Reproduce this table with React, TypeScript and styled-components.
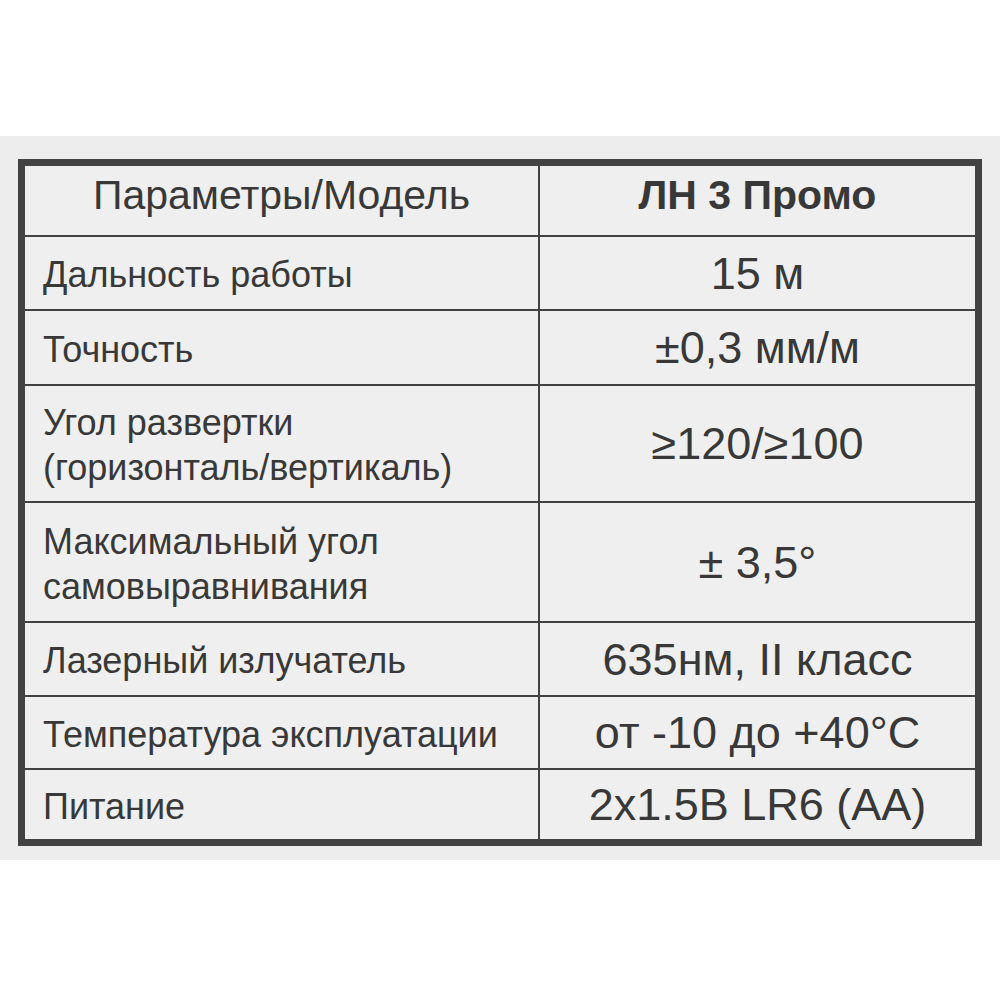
import React from "react";
import styled, { createGlobalStyle } from "styled-components";

const Global = createGlobalStyle`
  html, body { margin: 0; padding: 0; background: #ffffff; }
  body { font-family: "Liberation Sans", Arial, sans-serif; }
`;

const Page = styled.div`
  width: 1000px;
  height: 1000px;
  background: #ffffff;
  padding-top: 136px;
  box-sizing: border-box;
`;

const Sheet = styled.div`
  background: #ededed;
  height: 724px;
  box-sizing: border-box;
  padding: 23px 18px 0 18px;
`;

const Table = styled.div`
  display: grid;
  grid-template-columns: 515px 1fr;
  grid-template-rows: 71px 74px 75px 117px 120px 74px 73px 69px;
  border: 7px solid #424242;
  background: #efefef;
  color: #383838;
`;

const Cell = styled.div<{ $left?: boolean; $last?: boolean; $center?: boolean }>`
  display: flex;
  align-items: center;
  justify-content: ${(p) => (p.$center ? "center" : "flex-start")};
  text-align: ${(p) => (p.$center ? "center" : "left")};
  box-sizing: border-box;
  border-bottom: ${(p) => (p.$last ? "none" : "2px solid #424242")};
  border-right: ${(p) => (p.$left ? "2px solid #424242" : "none")};
  padding-left: ${(p) => (p.$left && !p.$center ? "18px" : "0")};
  padding-top: ${(p) => (p.$left && !p.$center ? "3px" : "0")};
  font-size: ${(p) => (p.$left ? "36px" : "45px")};
  line-height: 45px;
`;

const HeadCell = styled(Cell)<{ $bold?: boolean }>`
  font-size: 41px;
  padding-top: 0;
  padding-bottom: 10px;
  font-weight: ${(p) => (p.$bold ? 700 : 400)};
`;

const rows: [string[], string][] = [
  [["Дальность работы"], "15 м"],
  [["Точность"], "±0,3 мм/м"],
  [["Угол развертки", "(горизонталь/вертикаль)"], "≥120/≥100"],
  [["Максимальный угол", "самовыравнивания"], "± 3,5°"],
  [["Лазерный излучатель"], "635нм, II класс"],
  [["Температура эксплуатации"], "от -10 до +40°C"],
  [["Питание"], "2x1.5В LR6 (AA)"],
];

export default function App() {
  return (
    <>
      <Global />
      <Page>
        <Sheet>
          <Table>
            <HeadCell $left $center>Параметры/Модель</HeadCell>
            <HeadCell $center $bold>ЛН 3 Промо</HeadCell>
            {rows.map(([l, r], i) => (
              <React.Fragment key={i}>
                <Cell $left $last={i === rows.length - 1}>
                  <div>
                    {l.map((t, j) => (
                      <div key={j}>{t}</div>
                    ))}
                  </div>
                </Cell>
                <Cell $center $last={i === rows.length - 1}>{r}</Cell>
              </React.Fragment>
            ))}
          </Table>
        </Sheet>
      </Page>
    </>
  );
}
